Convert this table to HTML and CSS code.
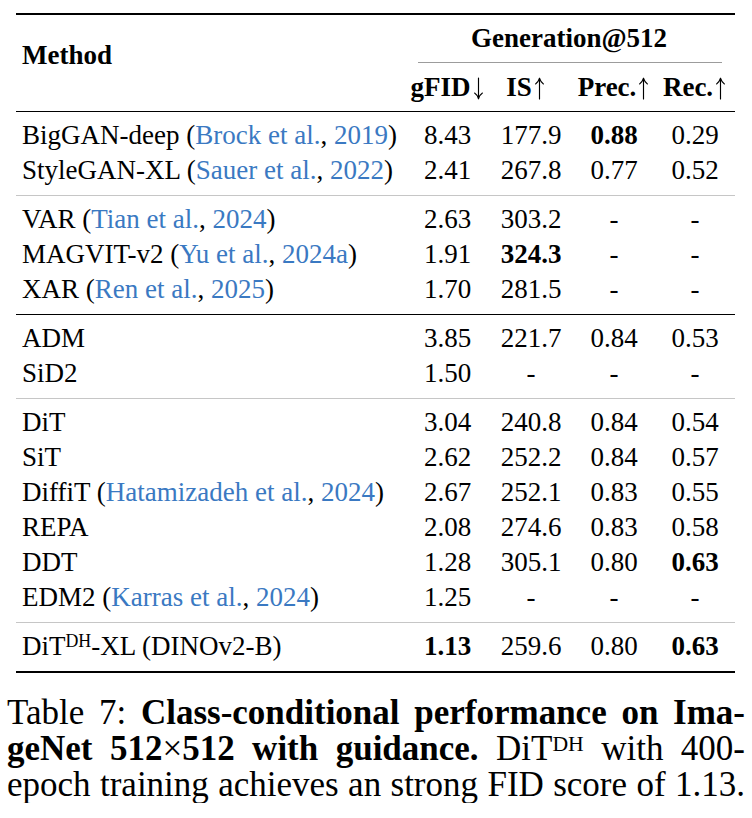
FILE: index.html
```html
<!DOCTYPE html>
<html lang="en">
<head>
<meta charset="utf-8">
<title>Table 7</title>
<link rel="stylesheet" href="styles.css">
</head>
<body>
<table class="tbl">
  <colgroup>
    <col class="c-method">
    <col class="c-fid">
    <col class="c-is">
    <col class="c-prec">
    <col class="c-rec">
  </colgroup>
  <thead>
    <tr>
      <th class="method" rowspan="2">Method</th>
      <th class="gen" colspan="4"><div class="gen-label">Generation@512</div><div class="cmid"></div></th>
    </tr>
    <tr class="sub">
      <th>gFID<svg class="arr" width="13" height="23" viewBox="0 0 13 23" aria-label="↓"><path d="M6.5 1 V21.5 M2.6 16 Q5.2 17.6 6.5 21.8 Q7.8 17.6 10.4 16"/></svg></th>
      <th class="is-h">IS<svg class="arr" width="13" height="23" viewBox="0 0 13 23" aria-label="↑"><path d="M6.5 22 V1.5 M2.6 7 Q5.2 5.4 6.5 1.2 Q7.8 5.4 10.4 7"/></svg></th>
      <th>Prec.<svg class="arr" width="13" height="23" viewBox="0 0 13 23" aria-label="↑"><path d="M6.5 22 V1.5 M2.6 7 Q5.2 5.4 6.5 1.2 Q7.8 5.4 10.4 7"/></svg></th>
      <th>Rec.<svg class="arr" width="13" height="23" viewBox="0 0 13 23" aria-label="↑"><path d="M6.5 22 V1.5 M2.6 7 Q5.2 5.4 6.5 1.2 Q7.8 5.4 10.4 7"/></svg></th>
    </tr>
  </thead>
  <tbody class="g-mid">
    <tr><td class="m">BigGAN-deep (<span class="cite">Brock et al.</span>, <span class="cite">2019</span>)</td><td>8.43</td><td>177.9</td><td><b>0.88</b></td><td>0.29</td></tr>
    <tr><td class="m">StyleGAN-XL (<span class="cite">Sauer et al.</span>, <span class="cite">2022</span>)</td><td>2.41</td><td>267.8</td><td>0.77</td><td>0.52</td></tr>
  </tbody>
  <tbody class="g-gray">
    <tr><td class="m">VAR (<span class="cite">Tian et al.</span>, <span class="cite">2024</span>)</td><td>2.63</td><td>303.2</td><td>-</td><td>-</td></tr>
    <tr><td class="m">MAGVIT-v2 (<span class="cite">Yu et al.</span>, <span class="cite">2024a</span>)</td><td>1.91</td><td><b>324.3</b></td><td>-</td><td>-</td></tr>
    <tr><td class="m">XAR (<span class="cite">Ren et al.</span>, <span class="cite">2025</span>)</td><td>1.70</td><td>281.5</td><td>-</td><td>-</td></tr>
  </tbody>
  <tbody class="g-mid">
    <tr><td class="m">ADM</td><td>3.85</td><td>221.7</td><td>0.84</td><td>0.53</td></tr>
    <tr><td class="m">SiD2</td><td>1.50</td><td>-</td><td>-</td><td>-</td></tr>
  </tbody>
  <tbody class="g-gray">
    <tr><td class="m">DiT</td><td>3.04</td><td>240.8</td><td>0.84</td><td>0.54</td></tr>
    <tr><td class="m">SiT</td><td>2.62</td><td>252.2</td><td>0.84</td><td>0.57</td></tr>
    <tr><td class="m">DiffiT (<span class="cite">Hatamizadeh et al.</span>, <span class="cite">2024</span>)</td><td>2.67</td><td>252.1</td><td>0.83</td><td>0.55</td></tr>
    <tr><td class="m">REPA</td><td>2.08</td><td>274.6</td><td>0.83</td><td>0.58</td></tr>
    <tr><td class="m">DDT</td><td>1.28</td><td>305.1</td><td>0.80</td><td><b>0.63</b></td></tr>
    <tr><td class="m">EDM2 (<span class="cite">Karras et al.</span>, <span class="cite">2024</span>)</td><td>1.25</td><td>-</td><td>-</td><td>-</td></tr>
  </tbody>
  <tbody class="g-gray">
    <tr><td class="m">DiT<sup class="sup-t">DH</sup>-XL (DINOv2-B)</td><td><b>1.13</b></td><td>259.6</td><td>0.80</td><td><b>0.63</b></td></tr>
  </tbody>
</table>
<p class="cap">
  <span class="ln">Table 7: <b>Class-conditional performance on Ima-</b></span>
  <span class="ln"><b>geNet 512<span class="times">×</span>512 with guidance.</b> DiT<sup class="sup-c">DH</sup> with 400-</span>
  <span class="ln">epoch training achieves an strong FID score of 1.13.</span>
</p>
</body>
</html>
```

FILE: styles.css
```css
html, body {
  margin: 0;
  padding: 0;
  background: #ffffff;
}

body {
  font-family: "Liberation Serif", "Times New Roman", serif;
  color: #000000;
}

.tbl {
  margin: 13px 0 0 16px;
  width: 719px;
  table-layout: fixed;
  border-collapse: separate;
  border-spacing: 0;
  border-top: 2px solid #000;
  border-bottom: 2px solid #000;
  font-size: 27px;
  line-height: 35px;
}

.c-method { width: 387px; }
.c-fid { width: 89px; }
.c-is { width: 78px; }
.c-prec { width: 88px; }
.c-rec { width: 77px; }

.tbl th,
.tbl td {
  padding: 0;
  white-space: nowrap;
  text-align: center;
  font-weight: normal;
}

.tbl thead th {
  font-weight: bold;
}

.tbl th.method {
  text-align: left;
  vertical-align: top;
  padding: 23px 0 0 6px;
}

.tbl th.gen {
  padding-top: 6px;
  vertical-align: top;
}

.gen-label {
  line-height: 35px;
}

.cmid {
  height: 1px;
  background: #9c9c9c;
  margin: 6px 13px 0 15px;
}

.tbl tr.sub th {
  padding-top: 7px;
  padding-bottom: 6px;
}

.tbl tr.sub th.is-h {
  padding-right: 10px;
}

.arr {
  display: inline-block;
  vertical-align: -4px;
  margin-left: 1px;
  fill: none;
  stroke: #000;
  stroke-width: 1.15;
  stroke-linecap: round;
  stroke-linejoin: round;
}

.tbl td.m {
  text-align: left;
  padding-left: 6px;
}

.tbl td:last-child,
.tbl tr.sub th:last-child {
  padding-right: 3px;
}

.tbl tbody tr:first-child td {
  padding-top: 6px;
}

.tbl tbody tr:last-child td {
  padding-bottom: 7px;
}

.tbl tbody.g-mid tr:first-child td {
  border-top: 1px solid #000;
}

.tbl tbody.g-gray tr:first-child td {
  border-top: 1px solid #c6c6c6;
}

.cite {
  color: #3a79c2;
}

.sup-t {
  font-size: 0.66em;
  line-height: 0;
  vertical-align: 8px;
}

.cap {
  margin: 22px 0 0 7px;
  width: 738px;
  font-size: 35px;
  line-height: 36px;
}

.ln {
  display: block;
  text-align: justify;
  text-align-last: justify;
}

.times {
  font-weight: normal;
}

.sup-c {
  font-size: 0.62em;
  line-height: 0;
  vertical-align: 9px;
}
```
